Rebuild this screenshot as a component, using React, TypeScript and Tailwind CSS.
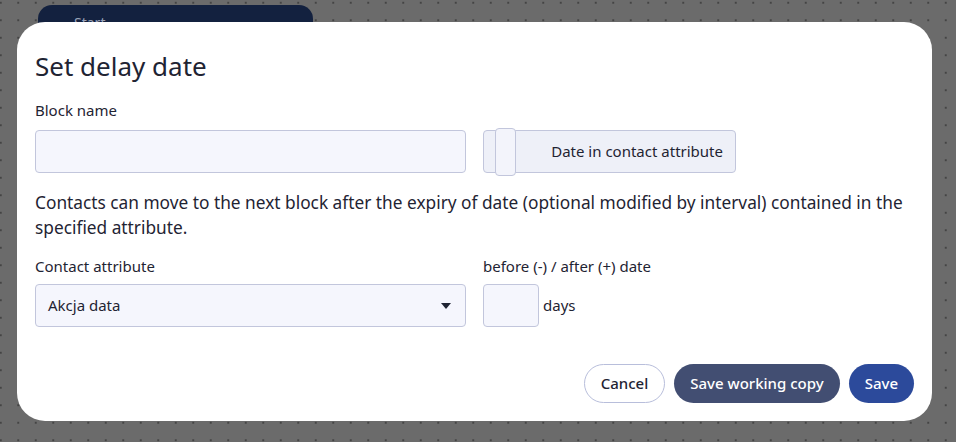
const App = () => {
  return (
    <div
      className="relative w-[956px] h-[442px] overflow-hidden bg-[#6b6b6b] font-['Noto_Sans',sans-serif] text-[#1f2433]"
      style={{
        backgroundImage: "radial-gradient(circle, #444 1px, transparent 1.2px)",
        backgroundSize: "17.5px 17.5px",
        backgroundPosition: "-8px -6px",
      }}
    >
      {/* node behind the dialog */}
      <div className="absolute left-[38px] top-[5px] w-[275px] h-[60px] rounded-[14px] bg-[#13213f] px-9 pt-2 text-[#9aa3b8] text-sm">
        Start
      </div>

      {/* dialog */}
      <div className="absolute left-[17px] top-[22px] w-[915px] h-[399px] rounded-[28px] bg-white px-[18px] pt-[26px]">
        <h2 className="text-[26px] leading-[36px] font-normal">Set delay date</h2>

        <div className="mt-[16px] text-[15px] leading-5">Block name</div>
        <div className="mt-[10px] flex gap-[17px]">
          <div className="w-[431px] h-[43px] rounded bg-[#f5f6fd] border border-[#c2c6dc]" />
          <div className="relative w-[253px] h-[43px] rounded bg-[#eef0f8] border border-[#c2c6dc] flex items-center justify-end pr-3 text-[15px]">
            <div className="absolute left-[11px] -top-[3px] w-[21px] h-[48px] rounded bg-[#f3f4fb] border border-[#c2c6dc]" />
            Date in contact attribute
          </div>
        </div>

        <p className="mt-[17px] text-[17.3px] leading-[25px] pr-2">
          Contacts can move to the next block after the expiry of date (optional modified by interval) contained in the
          specified attribute.
        </p>

        <div className="mt-[16px] flex gap-[17px]">
          <div className="w-[431px]">
            <div className="text-[15px] leading-5">Contact attribute</div>
            <div className="mt-[8px] h-[43px] rounded bg-[#f5f6fd] border border-[#c2c6dc] flex items-center justify-between pl-3 pr-3 text-[15px]">
              <span>Akcja data</span>
              <svg width="10" height="6" viewBox="0 0 10 6" className="mr-[2px]">
                <path d="M0 0h10L5 6z" fill="#1f2433" />
              </svg>
            </div>
          </div>
          <div>
            <div className="text-[15px] leading-5">before (-) / after (+) date</div>
            <div className="mt-[8px] flex items-center gap-[4px]">
              <div className="w-[56px] h-[43px] rounded bg-[#f5f6fd] border border-[#c2c6dc]" />
              <span className="text-[15px]">days</span>
            </div>
          </div>
        </div>

        <div className="mt-[37px] flex justify-end gap-[9px]">
          <button className="h-[39px] px-[16px] rounded-full border border-[#b8bedb] bg-white text-[15px] font-medium text-[#1f2433]">
            Cancel
          </button>
          <button className="h-[39px] px-[16px] rounded-full bg-[#424e72] text-[15px] font-medium text-white">
            Save working copy
          </button>
          <button className="h-[39px] px-[16px] rounded-full bg-[#2c4a9b] text-[15px] font-medium text-white">
            Save
          </button>
        </div>
      </div>
    </div>
  );
};

export default App;
